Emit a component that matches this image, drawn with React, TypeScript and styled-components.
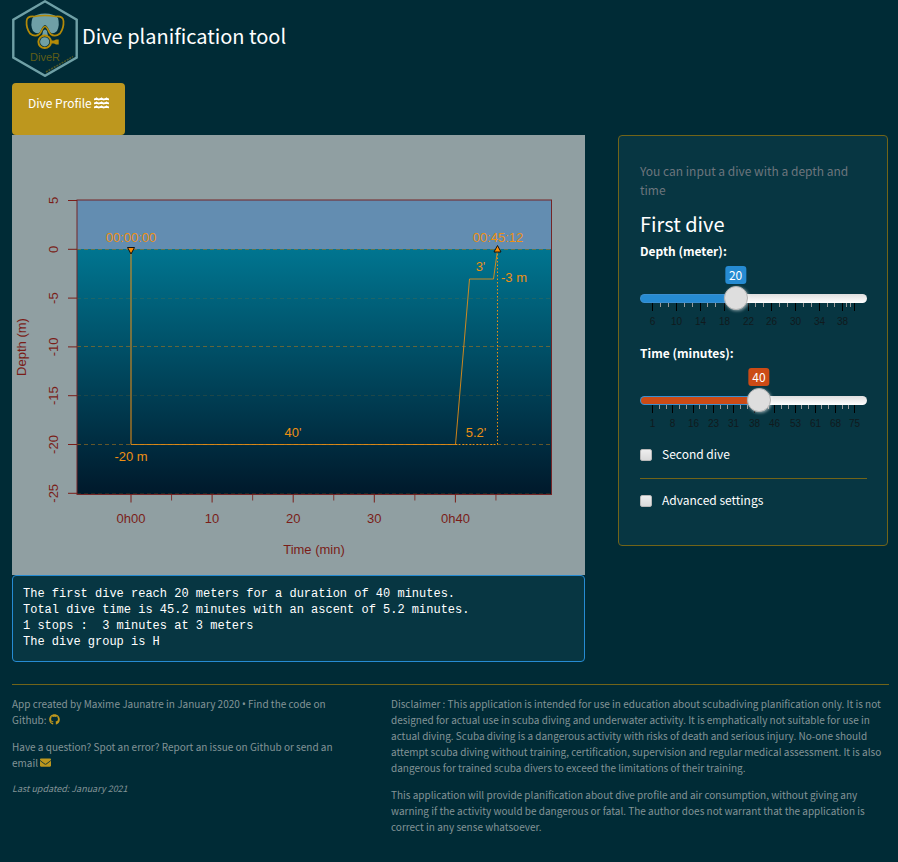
import React, { useState } from "react";
import styled, { createGlobalStyle } from "styled-components";
import { FaGithub, FaEnvelope } from "react-icons/fa";

const sans = '"Source Sans Pro", "Noto Sans CJK SC", sans-serif';
const plotFont = '"Liberation Sans", Arial, sans-serif';

const GlobalStyle = createGlobalStyle`
  *, *::before, *::after { box-sizing: border-box; }
  body {
    margin: 0;
    background: #002b36;
    color: #839496;
    font-family: ${sans};
    font-size: 12px;
    line-height: 19px;
  }
`;

const Page = styled.div`
  padding: 0 9px 24px 12px;
`;

const Header = styled.header`
  display: flex;
  align-items: center;
  gap: 4px;
  height: 77px;
`;

const Title = styled.h1`
  margin: 0;
  padding-bottom: 6px;
  color: #fff;
  font-size: 20px;
  font-weight: 400;
  line-height: 28px;
`;

const Logo = styled.svg`
  display: block;
  width: 66px;
  height: 77px;
`;

const Tabs = styled.nav`
  display: flex;
  margin-top: 6px;
`;

const Tab = styled.button`
  display: flex;
  align-items: center;
  gap: 2px;
  margin: 0;
  padding: 10px 16px 22px;
  border: 0;
  border-radius: 4px;
  background: #bd971e;
  color: #fff;
  font: inherit;
  line-height: 20px;
`;

const WavesIcon = styled.svg`
  display: block;
  width: 15px;
  height: 12px;
`;

const Main = styled.main`
  display: grid;
  grid-template-columns: 573fr 270fr;
  gap: 33px;
  align-items: start;
  padding-right: 1px;
`;

const Plot = styled.svg`
  display: block;
  width: 100%;
  height: auto;
  background: #909fa2;
  font-family: ${plotFont};
  font-size: 13px;
`;

const Summary = styled.pre`
  margin: 0;
  padding: 10px 10px 11px;
  border: 1px solid #268bd2;
  border-radius: 4px;
  background: #073642;
  color: #fff;
  font-family: "Liberation Mono", "Courier New", monospace;
  font-size: 12px;
  line-height: 16px;
`;

const Panel = styled.form`
  padding: 25px 20px 35px 21px;
  border: 1px solid #716419;
  border-radius: 4px;
  background: #073642;
  color: #fff;
`;

const Hint = styled.p`
  margin: 0;
  color: #6c757d;
`;

const Heading = styled.h2`
  margin: 11px 0 6px;
  font-size: 20px;
  font-weight: 400;
  line-height: 28px;
`;

const Fields = styled.div`
  display: grid;
  gap: 4px;
`;

const Field = styled.div`
  height: 98px;
`;

const FieldLabel = styled.label`
  display: block;
  font-weight: 700;
  line-height: 14px;
`;

const SliderBox = styled.div`
  position: relative;
  margin-top: 27px;
`;

const Bubble = styled.output<{ $color: string }>`
  position: absolute;
  top: -19px;
  transform: translateX(-50%);
  padding: 0 4px;
  border-radius: 3px;
  background: ${(p) => p.$color};
  color: #fff;
  line-height: 18px;
`;

const Range = styled.input<{ $color: string }>`
  position: relative;
  display: block;
  width: 100%;
  height: 26px;
  margin: 0;
  appearance: none;
  background: transparent;

  &::-webkit-slider-runnable-track {
    height: 9px;
    border: 1px solid transparent;
    border-radius: 5px;
    background:
      linear-gradient(${(p) => p.$color}, ${(p) => p.$color}) 0 0 / var(--fill) 100% no-repeat padding-box,
      linear-gradient(#3b8fd0, #3b8fd0) 0 0 / var(--fill) 100% no-repeat border-box,
      linear-gradient(#dedede, #fff) border-box;
  }

  &::-webkit-slider-thumb {
    appearance: none;
    width: 24px;
    height: 24px;
    margin-top: -9px;
    border: 1px solid #b4b4b4;
    border-radius: 50%;
    background: #dedede;
    box-shadow: 1px 1px 3px rgba(255, 255, 255, 0.5);
  }
`;

const Scale = styled.svg`
  display: block;
  width: 100%;
  height: 26px;
  margin-top: -9px;
  font-family: ${plotFont};
  font-size: 10px;
`;

const Check = styled.label`
  display: flex;
  align-items: center;
  gap: 10px;
  line-height: 20px;
`;

const CheckBox = styled.input`
  appearance: none;
  width: 12px;
  height: 12px;
  margin: 2px 0 0;
  border: 1px solid #b8b8b8;
  border-radius: 2px;
  background: linear-gradient(#eee, #dadada);

  &:checked { background: #268bd2; }
`;

const Rule = styled.hr<{ $space: string }>`
  margin: ${(p) => p.$space};
  border: 0;
  border-top: 1px solid #716419;
`;

const Footer = styled.footer`
  display: grid;
  grid-template-columns: 335fr 498fr;
  gap: 44px;
  font-size: 10px;
  line-height: 16px;

  p { margin: 0 0 11px; }
`;

const Bullet = styled.span`
  font-family: "Noto Sans", sans-serif;
  line-height: 1;
`;

const Updated = styled.p`
  font-size: 9px;
  font-style: italic;
  line-height: 14px;
`;

const IconLink = styled.a`
  color: #bd971e;
  font-size: 11px;
  line-height: 1;

  svg { display: inline-block; vertical-align: -1px; }
`;

const DiverLogo = () => (
  <Logo viewBox="0 0 66 77" role="img" aria-label="DiveR">
    <path d="M33 1.3 64.7 19.8V57.5L33 75.8 1.3 57.5V19.8Z" fill="none" stroke="#6fa0a6" strokeWidth="2.4" />
    <path d="M20.500 18Q24 13.500 33 13.500T46 18Q48 25 45 31Q41 35 38 32Q35 25 33 25T28 32Q25 35 21 31Q18 25 20.500 18Z" fill="#6fa0a6" />
    <path d="M22 16.5Q33 14.5 44 16.5Q51 16 51.5 21Q52 28 48 33.5Q43 37.5 38.5 34C36.5 32 35.5 26.5 33 26.5S29.500 32 27.500 34Q23 37.500 18 33.500Q14 28 14.600 21Q15 16 22 16.500Z" fill="none" stroke="#b38a08" strokeWidth="1.7" />
    <path d="M31 31Q33 28 35 31L36 36H30Z" fill="#6fa0a6" />
    <path d="M38 40.500H42L44 39.500H46.700V44.500H44L42 43.500H38Z" fill="#b38a08" />
    <circle cx="32.700" cy="41.800" r="6.300" fill="#002b36" stroke="#b38a08" strokeWidth="2" />
    <circle cx="32.700" cy="41.800" r="4.600" fill="#6fa0a6" />
    <text x="33" y="61" textAnchor="middle" fontSize="11" fontFamily="Liberation Sans, Arial, sans-serif" fill="#5f5d16">DiveR</text>
    <path d="M34 72 61 56.500" stroke="#4d5727" strokeWidth="1.500" strokeDasharray="2 1" />
  </Logo>
);

const Waves = () => (
  <WavesIcon viewBox="0 0 16 12" preserveAspectRatio="none" aria-hidden="true">
    {[2, 6, 10].map((y) => (
      <path
        key={y}
        d={`M0 ${y + 0.4}Q1.500 ${y + 0.4} 2.700 ${y - 0.5}Q4 ${y + 0.6} 5.300 ${y + 0.4}T8 ${y - 0.5}Q9.300 ${y + 0.6} 10.700 ${y + 0.4}T13.300 ${y - 0.5}Q14.500 ${y + 0.4} 16 ${y + 0.4}`}
        fill="none"
        stroke="#fff"
        strokeWidth="1.900"
      />
    ))}
  </WavesIcon>
);

const depthTicks = [5, 0, -5, -10, -15, -20, -25];
const depthY = (d: number) => 114.3 - d * 9.76;
const timeX = (t: number) => 119 + t * 8.11;
const timeLabels = ["0h00", "10", "20", "30", "0h40"];
const ink = "#7a1d18";
const orange = "#ee9013";

const DivePlot = () => (
  <Plot viewBox="0 0 573 440" role="img" aria-label="Dive profile">
    <defs>
      <linearGradient id="sea" x1="0" y1="0" x2="0" y2="1">
        <stop offset="0" stopColor="#007590" />
        <stop offset="1" stopColor="#00192b" />
      </linearGradient>
    </defs>
    <rect x="65" y="65" width="475" height="50" fill="#638db1" />
    <rect x="65" y="114" width="475" height="245" fill="url(#sea)" />
    {[0, -5, -10, -15, -20, -25].map((d) => (
      <line
        key={d}
        x1="65"
        x2="540"
        y1={Math.floor(depthY(d)) + 0.5}
        y2={Math.floor(depthY(d)) + 0.5}
        stroke="#a5731c"
        strokeOpacity={d % 10 === 0 ? 0.6 : 0.18}
        strokeDasharray="4 3"
      />
    ))}
    <rect x="65" y="65" width="474.500" height="294.500" fill="none" stroke="#742526" />
    <g stroke={ink}>
      {depthTicks.map((d) => (
        <line key={d} x1="56" x2="65" y1={depthY(d)} y2={depthY(d)} />
      ))}
      {[0, 10, 20, 30, 40].map((t) => (
        <line key={t} x1={timeX(t)} x2={timeX(t)} y1="359" y2="367.500" />
      ))}
      {[5, 15, 25, 35, 45].map((t) => (
        <line key={t} x1={timeX(t)} x2={timeX(t)} y1="359" y2="365.500" strokeOpacity="0.8" />
      ))}
    </g>
    <g fill={ink} textAnchor="middle">
      {depthTicks.map((d) => (
        <text key={d} transform={`translate(46 ${depthY(d)}) rotate(-90)`}>{d}</text>
      ))}
      {timeLabels.map((label, i) => (
        <text key={label} x={timeX(i * 10)} y="388">{label}</text>
      ))}
      <text x="302" y="419">Time (min)</text>
      <text transform="translate(14 212) rotate(-90)">Depth (m)</text>
    </g>
    <g fill="none" stroke={orange}>
      <path d="M119 115V309.500" strokeWidth="2" strokeOpacity="0.5" />
      <path d="M119 309.500H443.500L457.500 144H481.500L485.500 115" strokeOpacity="0.85" />
      <path d="M443.500 309.500H485.500V115" strokeDasharray="1.500 2" />
    </g>
    <path d="M115.500 112.500H122.500L119 119Z" fill="#ff8c00" stroke="#111" />
    <path d="M482 117H489L485.500 110.500Z" fill="#ff8c00" stroke="#111" />
    <g fill={orange} textAnchor="middle">
      <text x="119" y="107">00:00:00</text>
      <text x="486" y="107">00:45:12</text>
      <text x="468.500" y="136">3'</text>
      <text x="502" y="147">-3 m</text>
      <text x="281" y="302">40'</text>
      <text x="464" y="302">5.2'</text>
      <text x="119" y="326">-20 m</text>
    </g>
  </Plot>
);

type ScaleData = { major: number[]; minor: number[]; labels: string[] };

const depthScale: ScaleData = {
  major: [12, 36, 60, 84, 108, 131, 155, 179, 202, 214],
  minor: [20, 28, 44, 52, 67, 75, 91, 99, 115, 123, 139, 147, 163, 171, 187, 194, 206, 210],
  labels: ["6", "10", "14", "18", "22", "26", "30", "34", "38"],
};

const timeScale: ScaleData = {
  major: [12, 32, 53, 73, 93, 114, 134, 155, 175, 195, 214],
  minor: [19, 26, 39, 46, 59, 66, 80, 87, 100, 107, 121, 128, 141, 148, 161, 168, 181, 188, 202, 208],
  labels: ["1", "8", "16", "23", "31", "38", "46", "53", "61", "68", "75"],
};

const share = (x: number) => `${((x + 0.5) / 227) * 100}%`;

type SliderProps = {
  id: string;
  label: string;
  min: number;
  max: number;
  start: number;
  color: string;
  scale: ScaleData;
};

const Slider = ({ id, label, min, max, start, color, scale }: SliderProps) => {
  const [value, setValue] = useState(start);
  const ratio = (value - min) / (max - min);
  const left = `calc(12px + (100% - 24px) * ${ratio})`;
  return (
    <Field>
      <FieldLabel htmlFor={id}>{label}</FieldLabel>
      <SliderBox>
        <Bubble htmlFor={id} $color={color} style={{ left }}>{value}</Bubble>
        <Range
          id={id}
          type="range"
          min={min}
          max={max}
          value={value}
          $color={color}
          style={{ "--fill": left } as React.CSSProperties}
          onChange={(e) => setValue(Number(e.target.value))}
        />
        <Scale aria-hidden="true">
          {scale.minor.map((x) => (
            <line key={x} x1={share(x)} x2={share(x)} y1="0" y2="5" stroke="#999" />
          ))}
          {scale.major.map((x) => (
            <line key={x} x1={share(x)} x2={share(x)} y1="0" y2="9" stroke="#000" />
          ))}
          {scale.labels.map((text, i) => (
            <text key={text} x={share(scale.major[i])} y="23" textAnchor="middle" fill="#101a1d">{text}</text>
          ))}
        </Scale>
      </SliderBox>
    </Field>
  );
};

export default function App() {
  return (
    <>
      <GlobalStyle />
      <Page>
        <Header>
          <DiverLogo />
          <Title>Dive planification tool</Title>
        </Header>
        <Tabs>
          <Tab type="button">Dive Profile <Waves /></Tab>
        </Tabs>
        <Main>
          <section>
            <DivePlot />
            <Summary>{`The first dive reach 20 meters for a duration of 40 minutes.
Total dive time is 45.2 minutes with an ascent of 5.2 minutes.
1 stops :  3 minutes at 3 meters
The dive group is H`}</Summary>
          </section>
          <Panel>
            <Hint>You can input a dive with a depth and time</Hint>
            <Heading>First dive</Heading>
            <Fields>
              <Slider id="depth" label="Depth (meter):" min={6} max={40} start={20} color="#268bd2" scale={depthScale} />
              <Slider id="time" label="Time (minutes):" min={1} max={75} start={40} color="#cb4b16" scale={timeScale} />
            </Fields>
            <Check><CheckBox type="checkbox" />Second dive</Check>
            <Rule $space="14px 0 11px" />
            <Check><CheckBox type="checkbox" />Advanced settings</Check>
          </Panel>
        </Main>
        <Rule $space="22px 0 11px" />
        <Footer>
          <div>
            <p>
              App created by Maxime Jaunatre in January 2020 <Bullet>•</Bullet> Find the code on Github:{" "}
              <IconLink href="#github" aria-label="Github"><FaGithub /></IconLink>
            </p>
            <p>
              Have a question? Spot an error? Report an issue on Github or send an email{" "}
              <IconLink href="#email" aria-label="Email"><FaEnvelope /></IconLink>
            </p>
            <Updated>Last updated: January 2021</Updated>
          </div>
          <div>
            <p>
              Disclaimer : This application is intended for use in education about scubadiving planification only. It is
              not designed for actual use in scuba diving and underwater activity. It is emphatically not suitable for
              use in actual diving. Scuba diving is a dangerous activity with risks of death and serious injury. No-one
              should attempt scuba diving without training, certification, supervision and regular medical assessment.
              It is also dangerous for trained scuba divers to exceed the limitations of their training.
            </p>
            <p>
              This application will provide planification about dive profile and air consumption, without giving any
              warning if the activity would be dangerous or fatal. The author does not warrant that the application is
              correct in any sense whatsoever.
            </p>
          </div>
        </Footer>
      </Page>
    </>
  );
}
